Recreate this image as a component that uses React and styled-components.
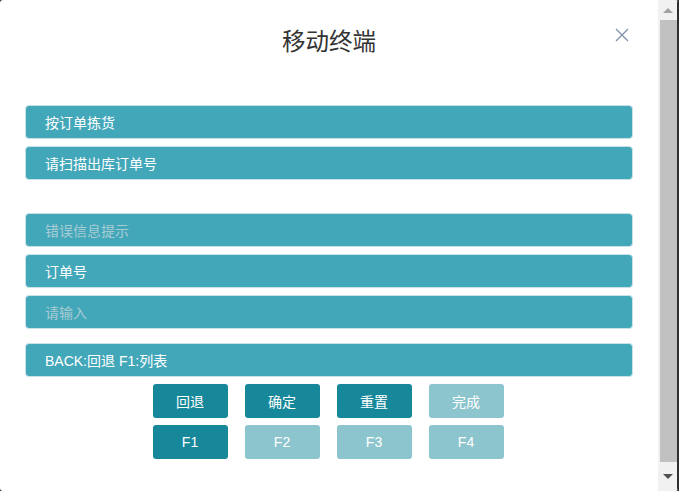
import React from "react";
import styled, { createGlobalStyle } from "styled-components";

const GlobalStyle = createGlobalStyle`
  html, body {
    margin: 0;
    padding: 0;
    background: #2e2e2e;
  }
  body {
    font-family: "Liberation Sans", "Noto Sans CJK SC", Arial, sans-serif;
  }
`;

const Modal = styled.div`
  width: 678px;
  height: 491px;
  background: #ffffff;
  border-radius: 3px;
  overflow: hidden;
  display: flex;
`;

const Content = styled.div`
  flex: 1;
  display: flex;
  flex-direction: column;
`;

const Header = styled.div`
  position: relative;
  height: 80px;
  display: flex;
  align-items: center;
  justify-content: center;
  padding-bottom: 1px;
  box-sizing: border-box;
`;

const Title = styled.h3`
  margin: 0;
  font-size: 23.5px;
  font-weight: normal;
  color: #333333;
  font-family: "Liberation Sans", "Noto Sans CJK SC", sans-serif;
`;

const Close = styled.button`
  position: absolute;
  right: 28px;
  top: 27px;
  width: 16px;
  height: 16px;
  padding: 0;
  border: 0;
  background: none;
  cursor: pointer;
  display: flex;
  align-items: center;
  justify-content: center;
`;

const Body = styled.div`
  padding: 25px 25px 0;
  display: flex;
  flex-direction: column;
`;

const Group = styled.div`
  display: flex;
  flex-direction: column;
  gap: 7px;
  margin-bottom: ${(p) => p.$space || 0}px;
`;

const Field = styled.div`
  height: 34px;
  box-sizing: border-box;
  background: #43a7ba;
  border: 1px solid #c9e2e7;
  border-radius: 4px;
  padding-left: 19px;
  display: flex;
  align-items: center;
  font-size: 14px;
  color: ${(p) => (p.$muted ? "#a9cbd3" : "#ffffff")};
`;

const Buttons = styled.div`
  display: grid;
  grid-template-columns: repeat(4, 75px);
  column-gap: 17px;
  row-gap: 7px;
  justify-content: center;
  margin-top: 7px;
  padding-right: 2px;
`;

const Key = styled.button`
  height: 34px;
  border: 0;
  border-radius: 3px;
  background: ${(p) => (p.$off ? "#8cc5cd" : "#17889a")};
  color: #ffffff;
  font-size: 14px;
  font-family: "Liberation Sans", "Noto Sans CJK SC", sans-serif;
  padding: 0;
  cursor: pointer;
`;

const Scrollbar = styled.div`
  width: 19px;
  background: #f1f1f1;
  display: flex;
  flex-direction: column;
  align-items: stretch;
  border-right: 1px solid #2e2e2e;
`;

const Arrow = styled.div`
  height: ${(p) => (p.$down ? 29 : 20)}px;
  display: flex;
  align-items: center;
  justify-content: center;
  &:before {
    content: "";
    width: 0;
    height: 0;
    border-left: 5px solid transparent;
    border-right: 5px solid transparent;
    ${(p) =>
      p.$down
        ? "border-top: 5px solid #505050;"
        : "border-bottom: 5px solid #a3a3a3;"}
  }
`;

const Thumb = styled.div`
  flex: 1;
  margin-left: 2px;
  background: #c1c1c1;
`;

const keys = [
  { label: "回退" },
  { label: "确定" },
  { label: "重置" },
  { label: "完成", off: true },
  { label: "F1" },
  { label: "F2", off: true },
  { label: "F3", off: true },
  { label: "F4", off: true },
];

export default function App() {
  return (
    <>
      <GlobalStyle />
      <Modal>
        <Content>
          <Header>
            <Title>移动终端</Title>
            <Close aria-label="close">
              <svg width="14" height="14" viewBox="0 0 14 14">
                <path
                  d="M1 1L13 13M13 1L1 13"
                  stroke="#7f93ad"
                  strokeWidth="1.3"
                  fill="none"
                />
              </svg>
            </Close>
          </Header>
          <Body>
            <Group $space={33}>
              <Field>按订单拣货</Field>
              <Field>请扫描出库订单号</Field>
            </Group>
            <Group $space={14}>
              <Field $muted>错误信息提示</Field>
              <Field>订单号</Field>
              <Field $muted>请输入</Field>
            </Group>
            <Group>
              <Field>BACK:回退 F1:列表</Field>
            </Group>
            <Buttons>
              {keys.map((k) => (
                <Key key={k.label} $off={k.off}>
                  {k.label}
                </Key>
              ))}
            </Buttons>
          </Body>
        </Content>
        <Scrollbar>
          <Arrow />
          <Thumb />
          <Arrow $down />
        </Scrollbar>
      </Modal>
    </>
  );
}
